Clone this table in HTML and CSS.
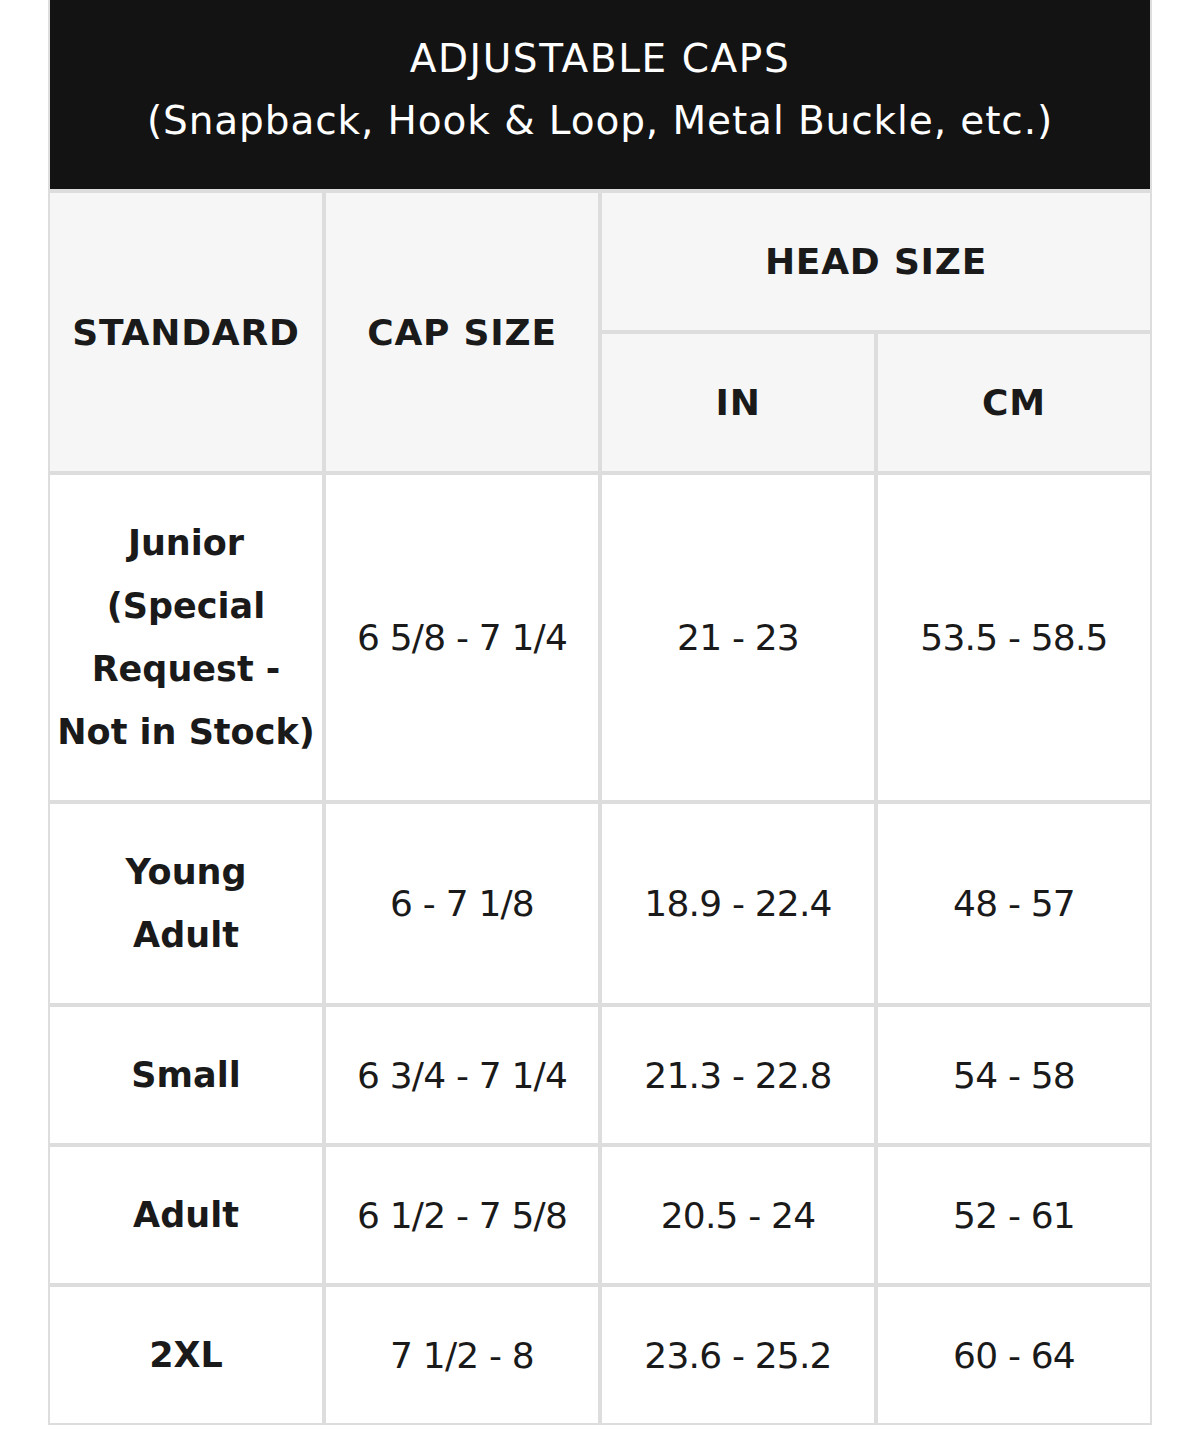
FILE: index.html
```html
<!DOCTYPE html>
<html lang="en">
<head>
<meta charset="utf-8">
<title>Adjustable Caps Size Chart</title>
<link rel="stylesheet" href="styles.css">
</head>
<body>
<div class="wrap">
  <table class="chart">
    <thead>
      <tr>
        <th class="title" colspan="4"><span class="title-main">ADJUSTABLE CAPS</span><br><span class="title-sub">(Snapback, Hook &amp; Loop, Metal Buckle, etc.)</span></th>
      </tr>
      <tr>
        <th class="head" rowspan="2">STANDARD</th>
        <th class="head" rowspan="2">CAP SIZE</th>
        <th class="head" colspan="2">HEAD SIZE</th>
      </tr>
      <tr>
        <th class="head">IN</th>
        <th class="head">CM</th>
      </tr>
    </thead>
    <tbody>
      <tr>
        <td class="std">Junior<br>(Special<br>Request -<br>Not in Stock)</td>
        <td>6 5/8 - 7 1/4</td>
        <td>21 - 23</td>
        <td>53.5 - 58.5</td>
      </tr>
      <tr>
        <td class="std">Young<br>Adult</td>
        <td>6 - 7 1/8</td>
        <td>18.9 - 22.4</td>
        <td>48 - 57</td>
      </tr>
      <tr>
        <td class="std">Small</td>
        <td>6 3/4 - 7 1/4</td>
        <td>21.3 - 22.8</td>
        <td>54 - 58</td>
      </tr>
      <tr>
        <td class="std">Adult</td>
        <td>6 1/2 - 7 5/8</td>
        <td>20.5 - 24</td>
        <td>52 - 61</td>
      </tr>
      <tr>
        <td class="std">2XL</td>
        <td>7 1/2 - 8</td>
        <td>23.6 - 25.2</td>
        <td>60 - 64</td>
      </tr>
    </tbody>
  </table>
</div>
</body>
</html>
```
FILE: styles.css
```css
html, body {
  margin: 0;
  padding: 0;
  background: #ffffff;
}

body {
  font-family: "DejaVu Sans", "Liberation Sans", sans-serif;
  color: #1a1a1a;
}

.wrap {
  padding: 0 48px;
}

.chart {
  width: 100%;
  border-collapse: separate;
  border-spacing: 0;
  table-layout: fixed;
}

.chart th,
.chart td {
  border: 2px solid #dddddd;
  text-align: center;
  vertical-align: middle;
  font-size: 36px;
  line-height: 63px;
  padding: 36.5px 2px;
}

.chart .title {
  background: #131313;
  color: #ffffff;
  font-weight: 400;
  font-size: 39px;
  line-height: 62px;
  padding: 28px 0 37px;
  border-top: 0;
}

.title-main {
  letter-spacing: 1.6px;
}

.title-sub {
  letter-spacing: 0.9px;
}

.chart .head {
  background: #f6f6f6;
  font-weight: 700;
  font-size: 36px;
  letter-spacing: 0.8px;
  padding-top: 37px;
  padding-bottom: 37px;
}

.chart td {
  background: #ffffff;
  font-weight: 400;
  letter-spacing: -0.8px;
}

.chart .std {
  font-weight: 700;
  font-size: 35px;
  white-space: nowrap;
  letter-spacing: 0;
}
```
